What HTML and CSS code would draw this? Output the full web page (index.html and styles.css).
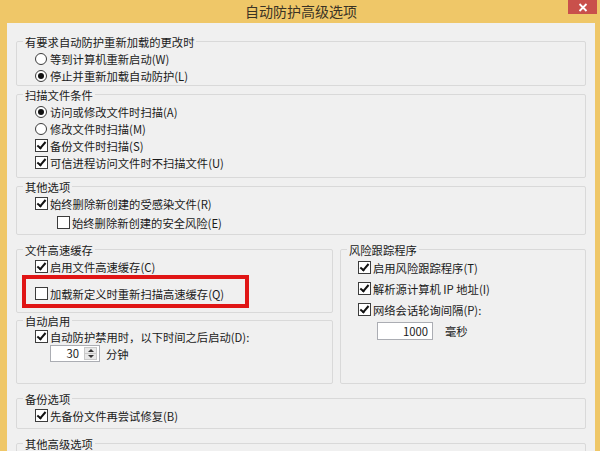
FILE: index.html
```html
<!DOCTYPE html>
<html lang="zh-CN">
<head>
<meta charset="utf-8">
<title>自动防护高级选项</title>
<link rel="stylesheet" href="styles.css">
</head>
<body>
<div class="window">
  <div class="titlebar">
    <span></span>
    <span class="title">自动防护高级选项</span>
    <span class="close"><svg width="10" height="9" viewBox="0 0 10 9"><path d="M1.5 1 L8.5 8 M8.5 1 L1.5 8" stroke="#fff" stroke-width="1.8" fill="none"/></svg></span>
  </div>
  <div class="client">
    <fieldset class="group g1">
      <legend>有要求自动防护重新加载的更改时</legend>
      <div class="opt"><span class="radio"></span>等到计算机重新启动(W)</div>
      <div class="opt"><span class="radio on"></span>停止并重新加载自动防护(L)</div>
    </fieldset>

    <fieldset class="group g2">
      <legend>扫描文件条件</legend>
      <div class="opt"><span class="radio on"></span>访问或修改文件时扫描(A)</div>
      <div class="opt"><span class="radio"></span>修改文件时扫描(M)</div>
      <div class="opt"><span class="check on"></span>备份文件时扫描(S)</div>
      <div class="opt"><span class="check on"></span>可信进程访问文件时不扫描文件(U)</div>
    </fieldset>

    <fieldset class="group g3">
      <legend>其他选项</legend>
      <div class="opt"><span class="check on"></span>始终删除新创建的受感染文件(R)</div>
      <div class="opt sub"><span class="check"></span>始终删除新创建的安全风险(E)</div>
    </fieldset>

    <div class="cols">
      <div class="col">
        <fieldset class="group g4">
          <legend>文件高速缓存</legend>
          <div class="opt"><span class="check on"></span>启用文件高速缓存(C)</div>
          <div class="highlight">
            <div class="opt"><span class="check"></span>加载新定义时重新扫描高速缓存(Q)</div>
          </div>
        </fieldset>
        <fieldset class="group g5">
          <legend>自动启用</legend>
          <div class="opt"><span class="check on"></span>自动防护禁用时，以下时间之后启动(D):</div>
          <div class="opt spinrow">
            <span class="spin"><span class="spin-val">30</span><span class="spin-btns"><span class="up"></span><span class="down"></span></span></span>
            <span class="unit">分钟</span>
          </div>
        </fieldset>
      </div>
      <fieldset class="group g6">
        <legend>风险跟踪程序</legend>
        <div class="opt tall"><span class="check on"></span>启用风险跟踪程序(T)</div>
        <div class="opt tall"><span class="check on"></span>解析源计算机 IP 地址(I)</div>
        <div class="opt tall"><span class="check on"></span>网络会话轮询间隔(P):</div>
        <div class="opt inputrow">
          <span class="field">1000</span>
          <span class="unit2">毫秒</span>
        </div>
      </fieldset>
    </div>

    <fieldset class="group g7">
      <legend>备份选项</legend>
      <div class="opt"><span class="check on"></span>先备份文件再尝试修复(B)</div>
    </fieldset>

    <fieldset class="group g8">
      <legend>其他高级选项</legend>
      <div class="opt"><span class="check on"></span>&nbsp;</div>
    </fieldset>
  </div>
</div>
</body>
</html>
```

FILE: styles.css
```css
html, body {
  margin: 0;
  padding: 0;
}
body {
  width: 600px;
  height: 451px;
  overflow: hidden;
  font-family: "Noto Sans CJK SC", "Noto Sans", sans-serif;
  font-size: 11.3px;
  color: #1a1a1a;
}
.window {
  width: 600px;
  height: 451px;
  background: #efc768;
  display: flex;
  flex-direction: column;
}
.titlebar {
  height: 23px;
  flex: none;
  display: grid;
  grid-template-columns: 1fr auto 1fr;
  align-items: start;
}
.title {
  font-size: 14px;
  line-height: 23px;
  color: #3a3325;
  padding-left: 2px;
}
.close {
  justify-self: end;
  margin-right: 3px;
  width: 29px;
  height: 14px;
  background: #c9504b;
  display: flex;
  align-items: center;
  justify-content: center;
}
.client {
  flex: 1;
  margin: 0 5px 0 7px;
  background: #f0f0f0;
  padding: 11px 9px 0 9px;
  overflow: hidden;
}
.group {
  margin: 0;
  border: 1px solid #d9d9d9;
  border-radius: 2px;
  padding: 2px 6px 1px 6px;
  min-width: 0;
}
.group legend {
  padding: 2px 2px 0 2px;
  line-height: 12px;
  font-size: 11.3px;
}
.opt {
  display: flex;
  align-items: center;
  height: 17px;
  margin-left: 12px;
  white-space: nowrap;
}
.radio {
  width: 10px;
  height: 10px;
  border: 1px solid #3c3c3c;
  border-radius: 50%;
  background: #fff;
  margin-right: 3px;
  flex: none;
  display: flex;
  align-items: center;
  justify-content: center;
}
.radio.on::after {
  content: "";
  width: 6px;
  height: 6px;
  border-radius: 50%;
  background: #111;
}
.check {
  width: 11px;
  height: 11px;
  border: 1px solid #3c3c3c;
  background: #fff;
  margin-right: 2px;
  flex: none;
  position: relative;
}
.check.on::after {
  content: "";
  position: absolute;
  left: 3px;
  top: 0px;
  width: 3px;
  height: 7px;
  border-right: 2px solid #111;
  border-bottom: 2px solid #111;
  transform: rotate(40deg);
}
.g2 { margin-top: 1px; padding-bottom: 6px; }
.g3 { margin-top: 1px; padding-bottom: 3px; }
.g3 .sub { margin-left: 34px; margin-top: 2px; }

.cols {
  margin-top: 7px;
  display: grid;
  grid-template-columns: 317px 1fr;
  column-gap: 7px;
}
.col {
  display: flex;
  flex-direction: column;
}
.g4 { padding-bottom: 4px; }
.highlight {
  margin-left: -1px;
  width: 219px;
  border: 4px solid #e01515;
  padding: 6px 0 2px 0;
}
.highlight .opt { margin-left: 9px; }
.g5 { padding-top: 1px; padding-bottom: 21px; }
.spinrow { margin-left: 27px; }
.spin {
  width: 48px;
  height: 15px;
  border: 1px solid #abadb3;
  background: #fff;
  display: flex;
  align-items: stretch;
}
.spin-val {
  flex: 1;
  text-align: right;
  line-height: 15px;
  padding-right: 5px;
}
.spin-btns {
  width: 13px;
  margin: 1px 2px 1px 0;
  display: flex;
  flex-direction: column;
  background: #e8e8e8;
  border: 1px solid #c9c9c9;
  box-sizing: border-box;
}
.spin-btns span {
  flex: 1;
  display: flex;
  align-items: center;
  justify-content: center;
}
.spin-btns .up { border-bottom: 1px solid #c9c9c9; }
.spin-btns .up::after {
  content: "";
  border-left: 3px solid transparent;
  border-right: 3px solid transparent;
  border-bottom: 3px solid #333;
}
.spin-btns .down::after {
  content: "";
  border-left: 3px solid transparent;
  border-right: 3px solid transparent;
  border-top: 3px solid #333;
}
.unit { margin-left: 6px; }

.g6 { padding-top: 1px; }
.g6 .opt { margin-left: 11px; }
.g6 .tall { height: 21px; }
.g6 .inputrow { margin-left: 30px; margin-top: 2px; height: 18px; }
.field {
  width: 50px;
  height: 16px;
  border: 1px solid #abadb3;
  background: #fff;
  text-align: right;
  line-height: 16px;
  padding-right: 4px;
}
.unit2 { margin-left: 12px; }

.g7 { margin-top: 7px; padding-bottom: 4px; }
.g8 { margin-top: 7px; }
```
